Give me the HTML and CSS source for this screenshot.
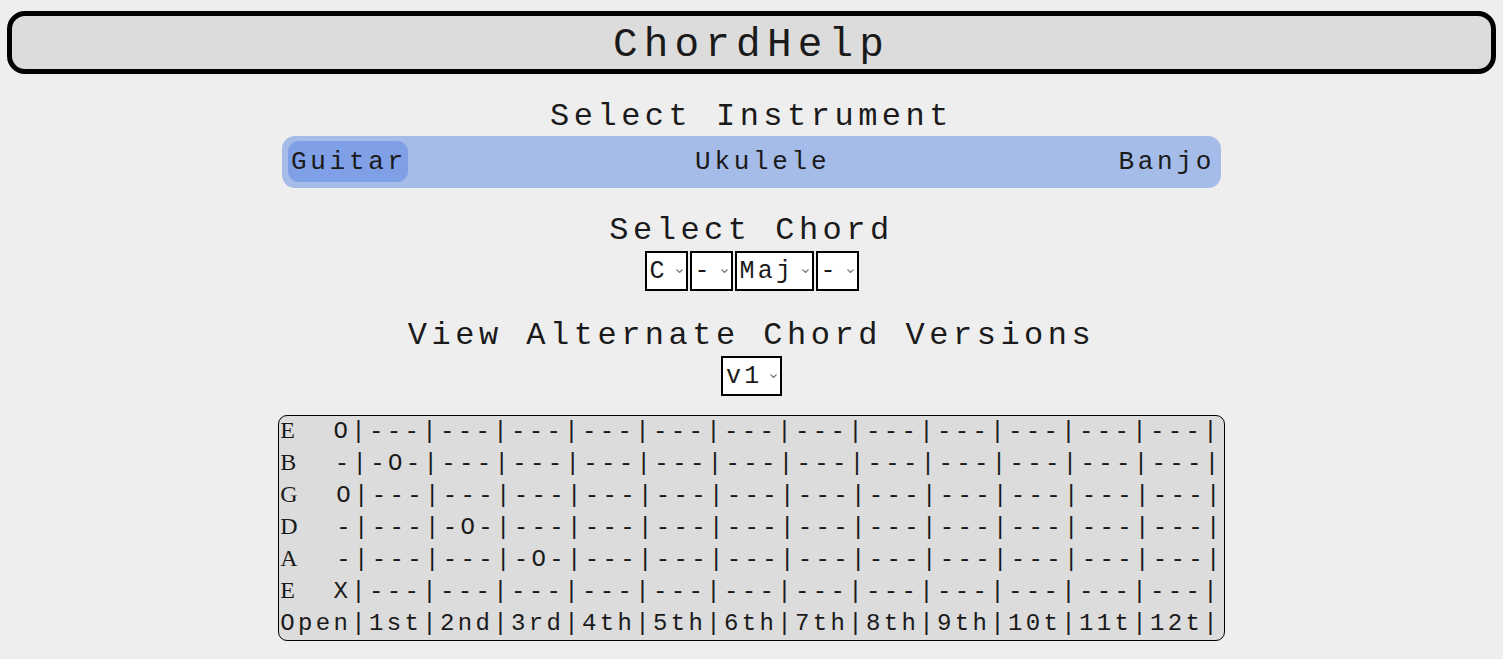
FILE: index.html
```html
<!DOCTYPE html>
<html lang="en">
<head>
<meta charset="utf-8">
<title>ChordHelp</title>
<link rel="stylesheet" href="styles.css">
</head>
<body>
<header class="site-header">
  <h1 class="site-title">ChordHelp</h1>
</header>
<main class="app">
  <section class="panel panel-instrument">
    <h2 class="panel-title">Select Instrument</h2>
    <nav class="instrument-bar">
      <button class="instrument is-active" type="button">Guitar</button>
      <button class="instrument" type="button">Ukulele</button>
      <button class="instrument" type="button">Banjo</button>
    </nav>
  </section>
  <section class="panel panel-chord">
    <h2 class="panel-title">Select Chord</h2>
    <div class="select-row">
      <label class="picker-wrap"><select class="picker"><option>C</option><option>D</option><option>E</option><option>F</option><option>G</option><option>A</option><option>B</option></select><svg class="chev" viewBox="0 0 7 4" width="7" height="4"><path d="M0.5 0.5 L3.5 3.5 L6.5 0.5" fill="none" stroke="#7a7a7a" stroke-width="1.2"/></svg></label>
      <label class="picker-wrap"><select class="picker"><option>-</option><option>#</option><option>b</option></select><svg class="chev" viewBox="0 0 7 4" width="7" height="4"><path d="M0.5 0.5 L3.5 3.5 L6.5 0.5" fill="none" stroke="#7a7a7a" stroke-width="1.2"/></svg></label>
      <label class="picker-wrap"><select class="picker"><option>Maj</option><option>Min</option><option>Dim</option></select><svg class="chev" viewBox="0 0 7 4" width="7" height="4"><path d="M0.5 0.5 L3.5 3.5 L6.5 0.5" fill="none" stroke="#7a7a7a" stroke-width="1.2"/></svg></label>
      <label class="picker-wrap"><select class="picker"><option>-</option><option>7</option><option>9</option></select><svg class="chev" viewBox="0 0 7 4" width="7" height="4"><path d="M0.5 0.5 L3.5 3.5 L6.5 0.5" fill="none" stroke="#7a7a7a" stroke-width="1.2"/></svg></label>
    </div>
  </section>
  <section class="panel panel-version">
    <h2 class="panel-title">View Alternate Chord Versions</h2>
    <div class="select-row">
      <label class="picker-wrap"><select class="picker"><option>v1</option><option>v2</option><option>v3</option></select><svg class="chev" viewBox="0 0 7 4" width="7" height="4"><path d="M0.5 0.5 L3.5 3.5 L6.5 0.5" fill="none" stroke="#7a7a7a" stroke-width="1.2"/></svg></label>
    </div>
  </section>
  <pre class="fretboard"><span class="string-name">E</span>  O|---|---|---|---|---|---|---|---|---|---|---|---|
<span class="string-name">B</span>  -|-O-|---|---|---|---|---|---|---|---|---|---|---|
<span class="string-name">G</span>  O|---|---|---|---|---|---|---|---|---|---|---|---|
<span class="string-name">D</span>  -|---|-O-|---|---|---|---|---|---|---|---|---|---|
<span class="string-name">A</span>  -|---|---|-O-|---|---|---|---|---|---|---|---|---|
<span class="string-name">E</span>  X|---|---|---|---|---|---|---|---|---|---|---|---|
Open|1st|2nd|3rd|4th|5th|6th|7th|8th|9th|10t|11t|12t|</pre>
</main>
</body>
</html>
```

FILE: styles.css
```css
* { box-sizing: border-box; }

html, body {
  margin: 0;
  padding: 0;
}

body {
  background: #eeeeee;
  color: #1a1a1a;
  font-family: "Liberation Mono", "Courier New", monospace;
  padding: 11px 7px 0;
}

.site-header {
  background: #dcdcdc;
  border: 5px solid #000;
  border-radius: 18px;
  height: 63px;
  padding-top: 5px;
  display: flex;
  align-items: center;
  justify-content: center;
}

.site-title {
  margin: 0;
  font-weight: normal;
  font-size: 41px;
  letter-spacing: 6.2px;
  line-height: 1;
}

.app {
  display: flex;
  flex-direction: column;
  align-items: center;
}

.panel {
  display: flex;
  flex-direction: column;
  align-items: center;
}

.panel-title {
  margin: 0;
  font-weight: normal;
  font-size: 32px;
  letter-spacing: 4.5px;
  line-height: 38px;
}

.panel-instrument .panel-title { margin-top: 24px; }
.panel-chord .panel-title { margin-top: 24px; }
.panel-version .panel-title { margin-top: 26px; }

.instrument-bar {
  width: 939px;
  margin-top: 0;
  background: #a5bce8;
  border-radius: 13px;
  padding: 5px 5px 6px 6px;
  display: flex;
  justify-content: space-between;
  align-items: center;
}

.instrument {
  font: inherit;
  font-size: 26px;
  letter-spacing: 3.7px;
  color: #1a1a1a;
  background: transparent;
  border: 0;
  border-radius: 11px;
  height: 41px;
  padding: 0 1px 0 3px;
  cursor: pointer;
}

.instrument.is-active { background: #7fa0e6; }

.select-row {
  display: flex;
  gap: 2px;
  margin-top: 1px;
}

.picker-wrap {
  position: relative;
  display: block;
}

.picker {
  -webkit-appearance: none;
  appearance: none;
  display: block;
  font-family: "Liberation Mono", "Courier New", monospace;
  font-size: 25px;
  letter-spacing: 3.3px;
  color: #1a1a1a;
  background: #fff;
  border: 2px solid #000;
  border-radius: 0;
  height: 40px;
  padding: 0 17px 0 3px;
  margin: 0;
  outline: none;
}

.chev {
  position: absolute;
  right: 5px;
  top: 18px;
  pointer-events: none;
}

.fretboard {
  margin: 19px 0 0;
  background: #dcdcdc;
  border: 1px solid #000;
  border-radius: 9px;
  font-family: "Liberation Mono", "Courier New", monospace;
  font-size: 24px;
  letter-spacing: 3.35px;
  line-height: 32px;
  color: #1a1a1a;
  padding: 0 0 0 1px;
}

.string-name {
  font-family: "Liberation Serif", "Times New Roman", serif;
  font-size: 24px;
  line-height: 20px;
  letter-spacing: 3.09px;
}
```
